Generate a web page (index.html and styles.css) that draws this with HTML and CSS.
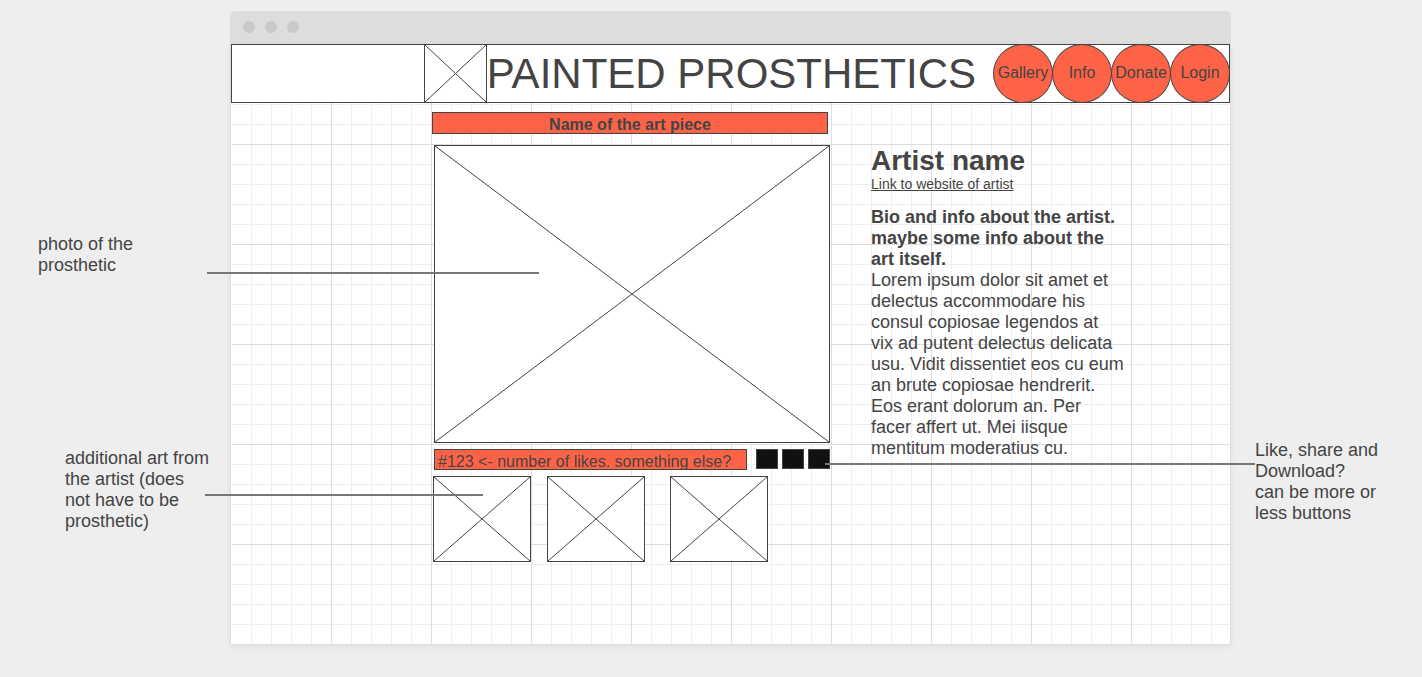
FILE: index.html
```html
<!DOCTYPE html>
<html lang="en">
<head>
<meta charset="utf-8">
<meta name="viewport" content="width=device-width, initial-scale=1">
<title>Painted Prosthetics</title>
<link rel="stylesheet" href="styles.css">
</head>
<body class="board">
  <aside class="notes notes-left">
    <div class="note note-photo">
      <p>photo of the<br>prosthetic</p>
      <span class="connector connector-photo"></span>
    </div>
    <div class="note note-art">
      <p>additional art from<br>the artist (does<br>not have to be<br>prosthetic)</p>
      <span class="connector connector-art"></span>
    </div>
  </aside>

  <div class="browser">
    <div class="chrome"><span class="dot"></span><span class="dot"></span><span class="dot"></span></div>
    <div class="page">
      <header class="header">
        <svg class="placeholder logo" role="img" aria-label="Logo"><line x1="0" y1="0" x2="100%" y2="100%"/><line x1="100%" y1="0" x2="0" y2="100%"/></svg>
        <h1 class="title">PAINTED PROSTHETICS</h1>
        <nav class="nav">
          <a class="nav-link" href="#gallery">Gallery</a>
          <a class="nav-link" href="#info">Info</a>
          <a class="nav-link" href="#donate">Donate</a>
          <a class="nav-link" href="#login">Login</a>
        </nav>
      </header>

      <main class="content">
        <section class="piece">
          <h2 class="piece-name">Name of the art piece</h2>
          <div class="media">
            <svg class="placeholder photo" role="img" aria-label="Photo of the prosthetic"><line x1="0" y1="0" x2="100%" y2="100%"/><line x1="100%" y1="0" x2="0" y2="100%"/></svg>
            <div class="actions">
              <p class="likes">#123 &lt;- number of likes. something else?</p>
              <div class="buttons">
                <button class="action" type="button" aria-label="Like"></button>
                <button class="action" type="button" aria-label="Share"></button>
                <button class="action" type="button" aria-label="Download"></button>
              </div>
            </div>
          </div>
          <div class="thumbs">
            <svg class="placeholder thumb" role="img" aria-label="Additional art 1"><line x1="0" y1="0" x2="100%" y2="100%"/><line x1="100%" y1="0" x2="0" y2="100%"/></svg>
            <svg class="placeholder thumb" role="img" aria-label="Additional art 2"><line x1="0" y1="0" x2="100%" y2="100%"/><line x1="100%" y1="0" x2="0" y2="100%"/></svg>
            <svg class="placeholder thumb" role="img" aria-label="Additional art 3"><line x1="0" y1="0" x2="100%" y2="100%"/><line x1="100%" y1="0" x2="0" y2="100%"/></svg>
          </div>
        </section>

        <section class="artist">
          <h2 class="artist-name">Artist name</h2>
          <a class="artist-link" href="#artist">Link to website of artist</a>
          <p class="bio"><strong>Bio and info about the artist.<br>maybe some info about the<br>art itself.</strong><br>Lorem ipsum dolor sit amet et<br>delectus accommodare his<br>consul copiosae legendos at<br>vix ad putent delectus delicata<br>usu. Vidit dissentiet eos cu eum<br>an brute copiosae hendrerit.<br>Eos erant dolorum an. Per<br>facer affert ut. Mei iisque<br>mentitum moderatius cu.</p>
        </section>
      </main>
    </div>
  </div>

  <aside class="notes notes-right">
    <div class="note">
      <p>Like, share and<br>Download?<br>can be more or<br>less buttons</p>
      <span class="connector connector-buttons"></span>
    </div>
  </aside>
</body>
</html>
```

FILE: styles.css
```css
* { box-sizing: border-box; }
h1, h2, p { margin: 0; }

.board {
  display: grid;
  grid-template-columns: 230fr 1001fr 191fr;
  min-height: 100vh;
  margin: 0;
  padding: 11px 0 32px;
  background: #eee;
  color: #444;
  font-family: "Liberation Sans", Arial, sans-serif;
  font-size: 18px;
  line-height: 21px;
}

/* Annotations beside the window */
.notes { position: relative; z-index: 1; white-space: nowrap; }
.notes-left { padding-top: 223px; }
.notes-right { padding: 429px 0 0 24px; }
.note { position: relative; }
.note-photo { padding-left: 38px; }
.note-art { padding-left: 65px; margin-top: 172px; }
.connector { position: absolute; height: 2px; background: #777; }
.connector-photo { left: 207px; top: 38px; width: 332px; }
.connector-art { left: 205px; top: 46px; width: 278px; }
.connector-buttons { right: 100%; top: 23px; width: 430px; }

/* Browser window */
.browser { display: flex; flex-direction: column; }
.chrome {
  display: flex;
  align-items: center;
  gap: 10px;
  height: 33px;
  padding: 0 13px 1px;
  background: #ddd;
  border-radius: 5px 5px 0 0;
}
.dot { width: 12px; height: 12px; border-radius: 50%; background: #c9c9c9; }
.page {
  flex: 1;
  border: 1px solid #ddd;
  border-top: 0;
  box-shadow: 0 2px 6px rgba(0, 0, 0, 0.06);
  background-color: #fff;
  background-image:
    linear-gradient(#fff, #fff),
    linear-gradient(#ddd 1px, transparent 1px),
    linear-gradient(90deg, #ddd 1px, transparent 1px),
    linear-gradient(#eee 1px, transparent 1px),
    linear-gradient(90deg, #eee 1px, transparent 1px);
  background-size: 1px 100%, 100px 100px, 100px 100px, 20px 20px, 20px 20px;
  background-repeat: no-repeat, repeat, repeat, repeat, repeat;
}

.placeholder { display: block; background: #fff; border: 1px solid #444; }
.placeholder line { stroke: #444; stroke-width: 1; }

.header {
  display: flex;
  justify-content: flex-end;
  align-items: center;
  height: 59px;
  background: #fff;
  box-shadow: inset 0 0 0 1px #444;
}
.logo { width: 63px; height: 59px; }
.title { font-size: 42px; line-height: 59px; font-weight: 400; white-space: nowrap; }
.nav { display: flex; margin-left: 18px; }
.nav-link {
  width: 60px;
  height: 59px;
  margin-left: -1px;
  border: 1px solid #444;
  border-radius: 50%;
  background: #ff6347;
  color: #444;
  font-size: 16px;
  line-height: 55px;
  text-align: center;
  text-decoration: none;
}

.content { display: grid; grid-template-columns: 398fr 359fr; column-gap: 41px; padding: 9px 0 0 201px; }
.piece-name {
  height: 22px;
  margin-right: 2px;
  border: 1px solid #444;
  background: #ff6347;
  font-size: 16px;
  line-height: 23px;
  text-align: center;
}
.media { margin: 11px 0 0 2px; }
.photo { width: 100%; height: 298px; }
.actions { display: flex; gap: 9px; margin-top: 6px; }
.likes {
  flex: 1;
  height: 21px;
  padding-left: 3px;
  overflow: hidden;
  border: 1px solid #444;
  background: #ff6347;
  font-size: 16px;
  line-height: 24px;
  white-space: nowrap;
}
.buttons { display: flex; gap: 4px; }
.action { width: 22px; height: 20px; padding: 0; border: 1px solid #444; background: #111; }
.thumbs { display: flex; gap: 16px; margin-top: 6px; padding-left: 1px; }
.thumb { width: 98px; height: 86px; }
.thumb:last-child { margin-left: 9px; }

.artist { padding-top: 34px; }
.artist-name { font-size: 28px; line-height: 30px; }
.artist-link { display: block; color: #444; font-size: 14px; line-height: 16px; }
.bio { margin-top: 15px; white-space: nowrap; }
```
